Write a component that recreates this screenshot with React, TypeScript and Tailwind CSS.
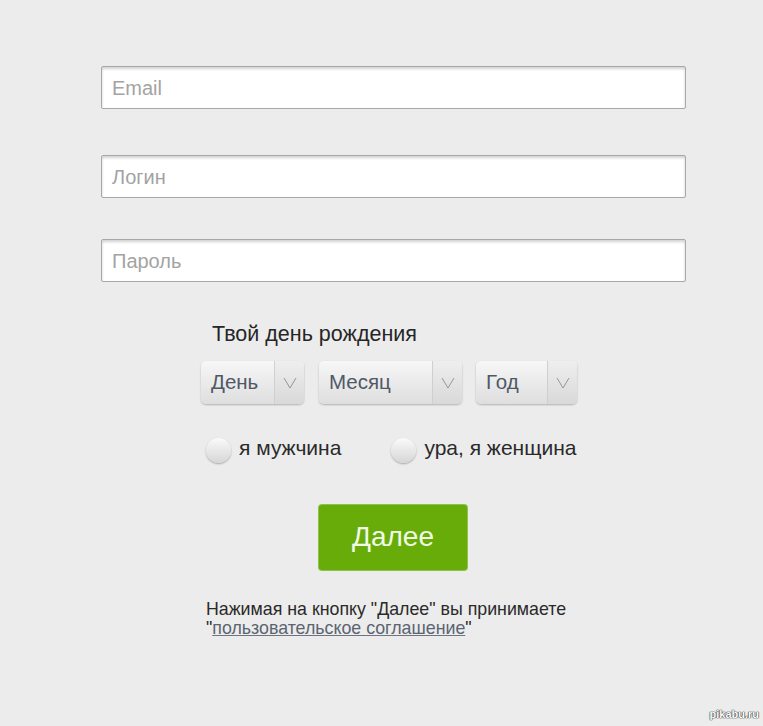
import React from "react";

function Input({ placeholder, mt }: { placeholder: string; mt: string }) {
  return (
    <div
      className={`${mt} h-[43px] w-[585px] rounded-[2px] border border-[#a8a8a8] bg-white shadow-[inset_0_2px_3px_rgba(0,0,0,0.18)] flex items-center pl-[10px] text-[20px] text-[#a3a3a3]`}
    >
      {placeholder}
    </div>
  );
}

function Select({ label, w }: { label: string; w: string }) {
  return (
    <div
      className={`${w} h-[43px] rounded-[5px] bg-gradient-to-b from-[#f7f7f7] to-[#dedede] shadow-[0_1px_2px_rgba(0,0,0,0.25)] flex items-stretch`}
    >
      <div className="flex-1 flex items-center pl-[10px] text-[20.5px] text-[#4f5966]">{label}</div>
      <div className="w-[30px] border-l border-[#cfcfcf] flex items-center justify-center bg-gradient-to-b from-[#eeeeee] to-[#d9d9d9] rounded-r-[5px]">
        <svg width="14" height="12" viewBox="0 0 14 12">
          <path d="M1 1 L7 11 L13 1" fill="none" stroke="#8d98a6" strokeWidth="1" />
        </svg>
      </div>
    </div>
  );
}

function Radio({ label }: { label: string }) {
  return (
    <div className="flex items-center">
      <div className="w-[25px] h-[25px] rounded-full bg-gradient-to-b from-[#fafafa] to-[#d6d6d6] shadow-[0_1px_2px_rgba(0,0,0,0.3)] mt-[6px]" />
      <span className="ml-[8px] text-[21px] text-[#2a2a2a]">{label}</span>
    </div>
  );
}

export default function App() {
  return (
    <div
      className="relative w-[763px] h-[726px] bg-[#ececec] overflow-hidden"
      style={{ fontFamily: '"Liberation Sans", Arial, sans-serif' }}
    >
      <div className="pl-[101px] pt-[66px] flex flex-col">
        <Input placeholder="Email" mt="" />
        <Input placeholder="Логин" mt="mt-[46px]" />
        <Input placeholder="Пароль" mt="mt-[41px]" />

        <div className="ml-[111px] mt-[40px] text-[21.5px] text-[#262626] leading-[25px]">
          Твой день рождения
        </div>

        <div className="ml-[100px] mt-[14px] flex">
          <Select label="День" w="w-[103px]" />
          <div className="ml-[15px]">
            <Select label="Месяц" w="w-[143px]" />
          </div>
          <div className="ml-[14px]">
            <Select label="Год" w="w-[101px]" />
          </div>
        </div>

        <div className="ml-[105px] mt-[28px] flex">
          <Radio label="я мужчина" />
          <div className="ml-[50px]">
            <Radio label="ура, я женщина" />
          </div>
        </div>

        <div className="ml-[218px] mt-[41px] w-[148px] h-[65px] rounded-[3px] bg-[#68ac0a] shadow-[0_0_0_1px_#8fc24a] flex items-center justify-center text-[28px] text-[#f2fbe6]">
          Далее
        </div>

        <div className="ml-[105px] mt-[30px] text-[17.8px] leading-[19px] text-[#2a2a2a]">
          <div>Нажимая на кнопку "Далее" вы принимаете</div>
          <div>
            "<span className="underline text-[#5b6470] decoration-[#6b7480]">пользовательское соглашение</span>"
          </div>
        </div>
      </div>

      <div
        className="absolute right-[4px] bottom-[4px] text-[11px] font-bold text-white"
        style={{ textShadow: "0 0 1px #333, 0 0 1px #333, 0 0 1px #333" }}
      >
        pikabu.ru
      </div>
    </div>
  );
}
